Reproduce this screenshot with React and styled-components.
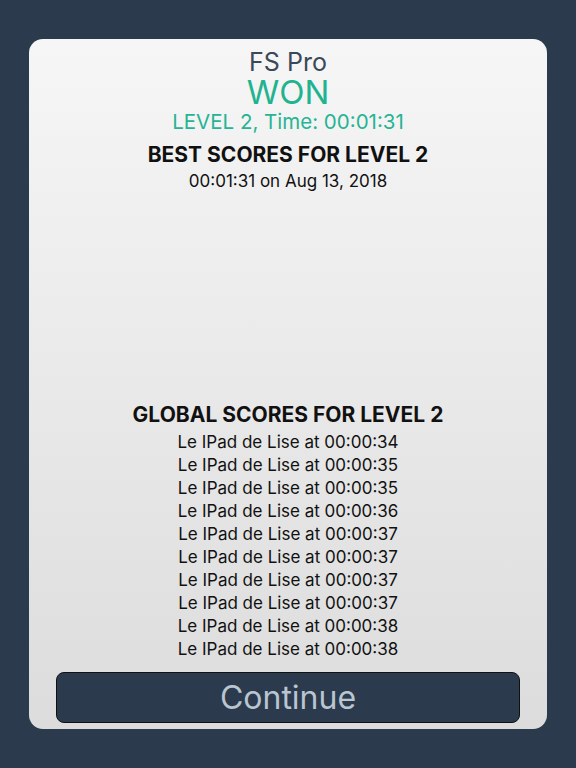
import React from "react";
import { styled, createGlobalStyle } from "styled-components";

const GlobalStyle = createGlobalStyle`
  html, body {
    margin: 0;
    padding: 0;
    background-color: #2b3a4c;
    font-family: "Inter", "Liberation Sans", sans-serif;
  }
`;

const Screen = styled.div`
  width: 576px;
  height: 768px;
  box-sizing: border-box;
  padding: 39px 29px 39px 29px;
  background-color: #2b3a4c;
`;

const Card = styled.div`
  height: 100%;
  box-sizing: border-box;
  border-radius: 14px;
  background: linear-gradient(#f6f6f6, #dcdcdc);
  display: flex;
  flex-direction: column;
  align-items: center;
  padding: 8px 27px 6px 27px;
`;

const Title = styled.div`
  font-size: 25px;
  color: #3a4858;
  line-height: 30px;
`;

const Won = styled.div`
  font-size: 33px;
  color: #1fb38f;
  line-height: 30px;
`;

const Level = styled.div`
  font-size: 20.5px;
  color: #26b495;
  line-height: 30px;
`;

const Heading = styled.div`
  font-size: 21px;
  font-weight: 700;
  color: #111111;
  line-height: 30px;
  margin-top: ${(p) => p.$top || 0}px;
  margin-bottom: ${(p) => p.$bottom || 0}px;
`;

const Line = styled.div`
  font-size: 17px;
  color: #111111;
  line-height: 23px;
`;

const Spacer = styled.div`
  flex: 1;
`;

const Continue = styled.button`
  width: 100%;
  height: 51px;
  margin-top: 11px;
  border: 1.5px solid #111111;
  border-radius: 8px;
  background-color: #2c3a4e;
  color: #b9c5d0;
  font-family: "Inter", "Liberation Sans", sans-serif;
  font-size: 32px;
  cursor: pointer;
`;

const scores = ["34", "35", "35", "36", "37", "37", "37", "37", "38", "38"];

export default function App() {
  return (
    <>
      <GlobalStyle />
      <Screen>
        <Card>
          <Title>FS Pro</Title>
          <Won>WON</Won>
          <Level>LEVEL 2, Time: 00:01:31</Level>
          <Heading $top={3}>BEST SCORES FOR LEVEL 2</Heading>
          <Line>00:01:31 on Aug 13, 2018</Line>
          <Spacer />
          <Heading $bottom={1}>GLOBAL SCORES FOR LEVEL 2</Heading>
          {scores.map((s, i) => (
            <Line key={i}>Le IPad de Lise at 00:00:{s}</Line>
          ))}
          <Continue>Continue</Continue>
        </Card>
      </Screen>
    </>
  );
}
